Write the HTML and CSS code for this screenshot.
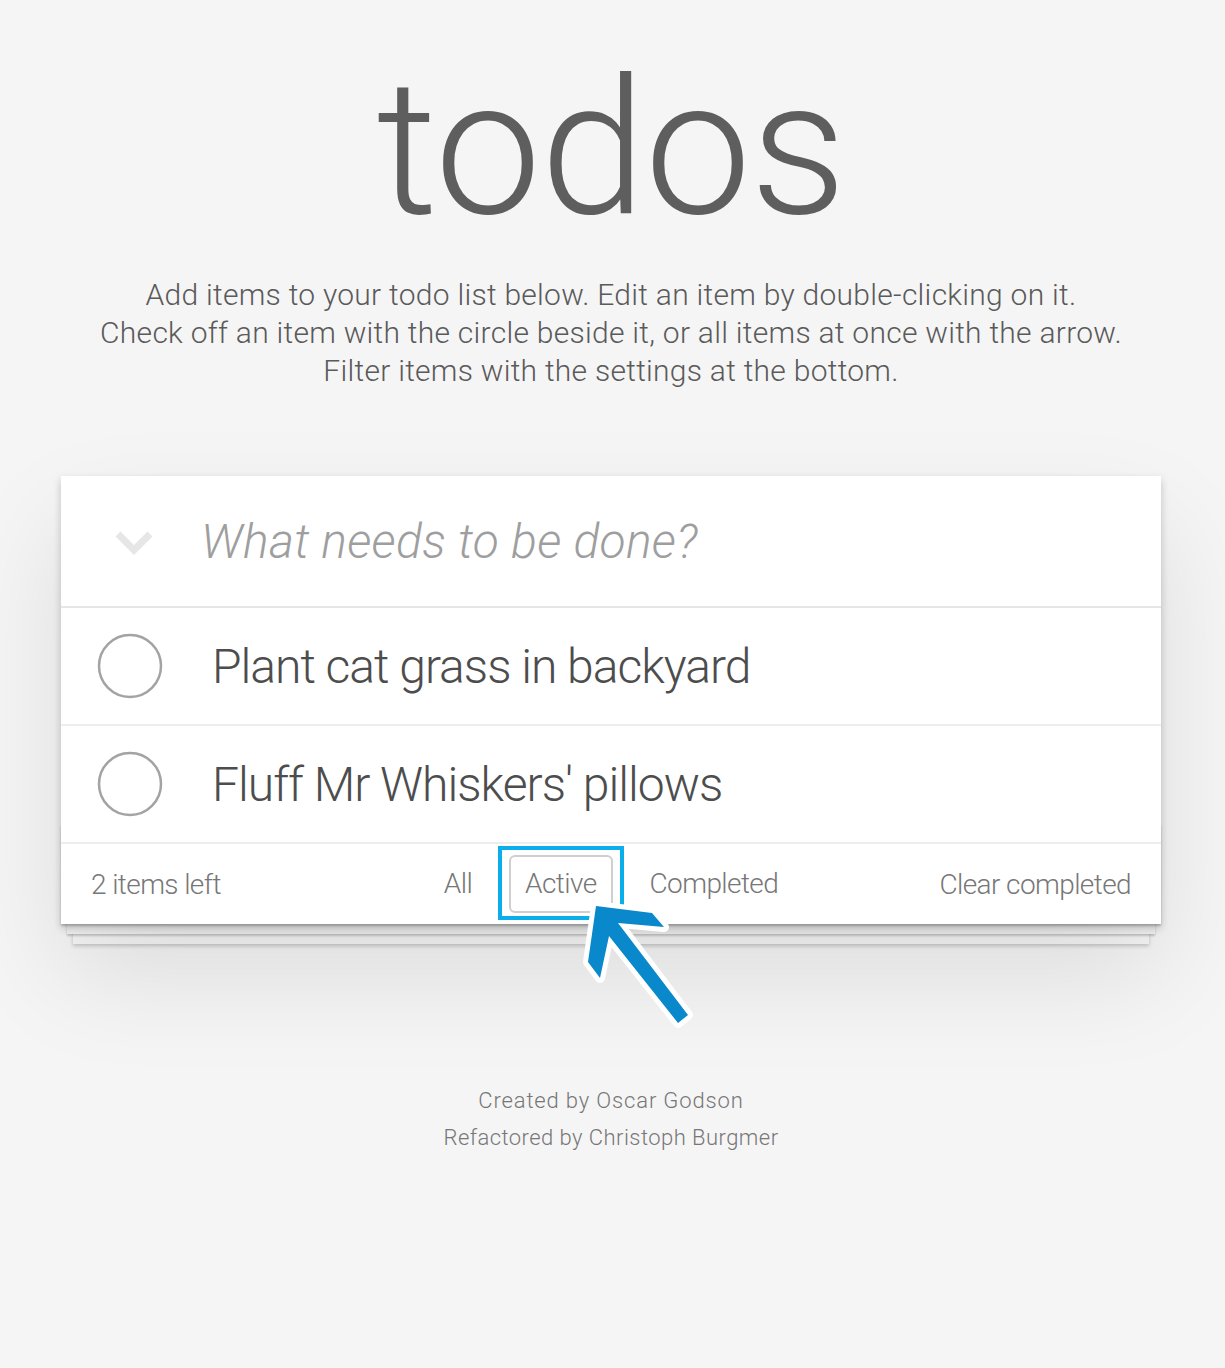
FILE: index.html
```html
<!DOCTYPE html>
<html lang="en">
<head>
<meta charset="utf-8">
<title>todos</title>
<link rel="stylesheet" href="styles.css">
</head>
<body>
<div class="page">
  <h1 class="title">todos</h1>
  <p class="intro">Add items to your todo list below. Edit an item by double-clicking on it.<br>Check off an item with the circle beside it, or all items at once with the arrow.<br>Filter items with the settings at the bottom.</p>

  <section class="todoapp">
    <header class="new-row">
      <span class="toggle-all">
        <svg width="40" height="30" viewBox="0 0 40 30"><polyline points="4,6 20,22 36,6" fill="none" stroke="#e6e6e6" stroke-width="7"/></svg>
      </span>
      <span class="new-todo">What needs to be done?</span>
    </header>
    <ul class="todo-list">
      <li class="todo">
        <span class="check"><svg width="66" height="66" viewBox="0 0 66 66"><circle cx="33" cy="33" r="31" fill="none" stroke="#a3a3a3" stroke-width="2.5"/></svg></span>
        <span class="todo-text">Plant cat grass in backyard</span>
      </li>
      <li class="todo">
        <span class="check"><svg width="66" height="66" viewBox="0 0 66 66"><circle cx="33" cy="33" r="31" fill="none" stroke="#a3a3a3" stroke-width="2.5"/></svg></span>
        <span class="todo-text">Fluff Mr Whiskers' pillows</span>
      </li>
    </ul>
    <footer class="footer">
      <span class="count">2 items left</span>
      <ul class="filters">
        <li><a class="filter">All</a></li>
        <li><a class="filter selected">Active</a></li>
        <li><a class="filter">Completed</a></li>
      </ul>
      <span class="clear">Clear completed</span>
    </footer>
    <div class="highlight"></div>
    <svg class="arrow" width="1100" height="600" viewBox="0 0 1100 600">
      <polygon points="535,430 591,437 603,451 557,447 627,539 617,547 548,460 539,502 527,486" fill="#0a88cc" stroke="#ffffff" stroke-width="10" stroke-linejoin="round" paint-order="stroke"/>
    </svg>
  </section>

  <div class="credits">
    <p class="credit-1">Created by Oscar Godson</p>
    <p class="credit-2">Refactored by Christoph Burgmer</p>
  </div>
</div>
</body>
</html>
```

FILE: styles.css
```css
html, body {
  margin: 0;
  padding: 0;
}
body {
  background: #f5f5f5;
  font-family: Roboto, "Liberation Sans", Arial, sans-serif;
  font-weight: 300;
  color: #4d4d4d;
  min-height: 1368px;
}
.page {
  width: 1100px;
  margin: 0 0 0 61px;
  padding-top: 48px;
}
.title {
  margin: 0;
  font-size: 190px;
  line-height: 200px;
  font-weight: 300;
  color: #5e5e5e;
  text-align: center;
  letter-spacing: -1px;
}
.intro {
  margin: 28px -60px 0;
  font-size: 30px;
  line-height: 38px;
  color: #5a5a5a;
  text-align: center;
  letter-spacing: 0.27px;
}
.todoapp {
  position: relative;
  margin-top: 86px;
  background: #fff;
  box-shadow: 0 4px 8px 0 rgba(0,0,0,0.2), 0 50px 100px 0 rgba(0,0,0,0.1);
}
.new-row {
  height: 130px;
  display: flex;
  align-items: center;
  border-bottom: 2px solid #e6e6e6;
}
.toggle-all {
  width: 140px;
  display: flex;
  justify-content: center;
  padding-left: 6px;
  box-sizing: border-box;
  margin-top: 4px;
}
.new-todo {
  font-size: 48px;
  font-style: italic;
  color: #9e9e9e;
  letter-spacing: 0.3px;
}
.todo-list {
  list-style: none;
  margin: 0;
  padding: 0;
}
.todo {
  height: 116px;
  display: flex;
  align-items: center;
  border-bottom: 2px solid #ededed;
}
.check {
  width: 151px;
  display: flex;
  justify-content: flex-start;
  padding-left: 36px;
  box-sizing: border-box;
}
.check svg {
  display: block;
}
.todo-text {
  font-size: 48px;
  color: #4d4d4d;
  letter-spacing: -1px;
}
.footer {
  position: relative;
  height: 80px;
  display: flex;
  align-items: center;
  justify-content: space-between;
  padding: 0 30px;
  font-size: 28px;
  color: #777;
  box-sizing: border-box;
  letter-spacing: -0.6px;
}
.footer::before {
  content: "";
  position: absolute;
  left: 0;
  right: 0;
  bottom: 0;
  height: 100px;
  z-index: -1;
  box-shadow: 0 2px 2px rgba(0,0,0,0.2),
              0 16px 0 -6px #f6f6f6,
              0 18px 2px -6px rgba(0,0,0,0.2),
              0 32px 0 -12px #f6f6f6,
              0 34px 4px -12px rgba(0,0,0,0.2);
}
.count, .clear {
  position: relative;
  z-index: 1;
}
.filters {
  position: absolute;
  left: 0;
  right: 0;
  top: 0;
  bottom: 0;
  margin: 0;
  padding: 0;
  list-style: none;
  display: flex;
  justify-content: center;
  align-items: center;
  gap: 21px;
}
.filter {
  display: block;
  padding: 6px 14px;
  border: 2px solid transparent;
  border-radius: 6px;
  color: #777;
  line-height: 42px;
}
.filter.selected {
  border-color: #cfcfcf;
}
.highlight {
  position: absolute;
  left: 437px;
  top: 370px;
  width: 126px;
  height: 74px;
  box-sizing: border-box;
  border: 4px solid #0aaeea;
}
.arrow {
  position: absolute;
  left: 0;
  top: 0;
  overflow: visible;
  pointer-events: none;
}
.credits {
  margin-top: 158px;
  text-align: center;
  font-size: 22px;
  line-height: 37px;
  color: #777;
}
.credits p {
  margin: 0;
}
.credit-1 {
  letter-spacing: 0.85px;
}
.credit-2 {
  letter-spacing: 0.45px;
}
```
